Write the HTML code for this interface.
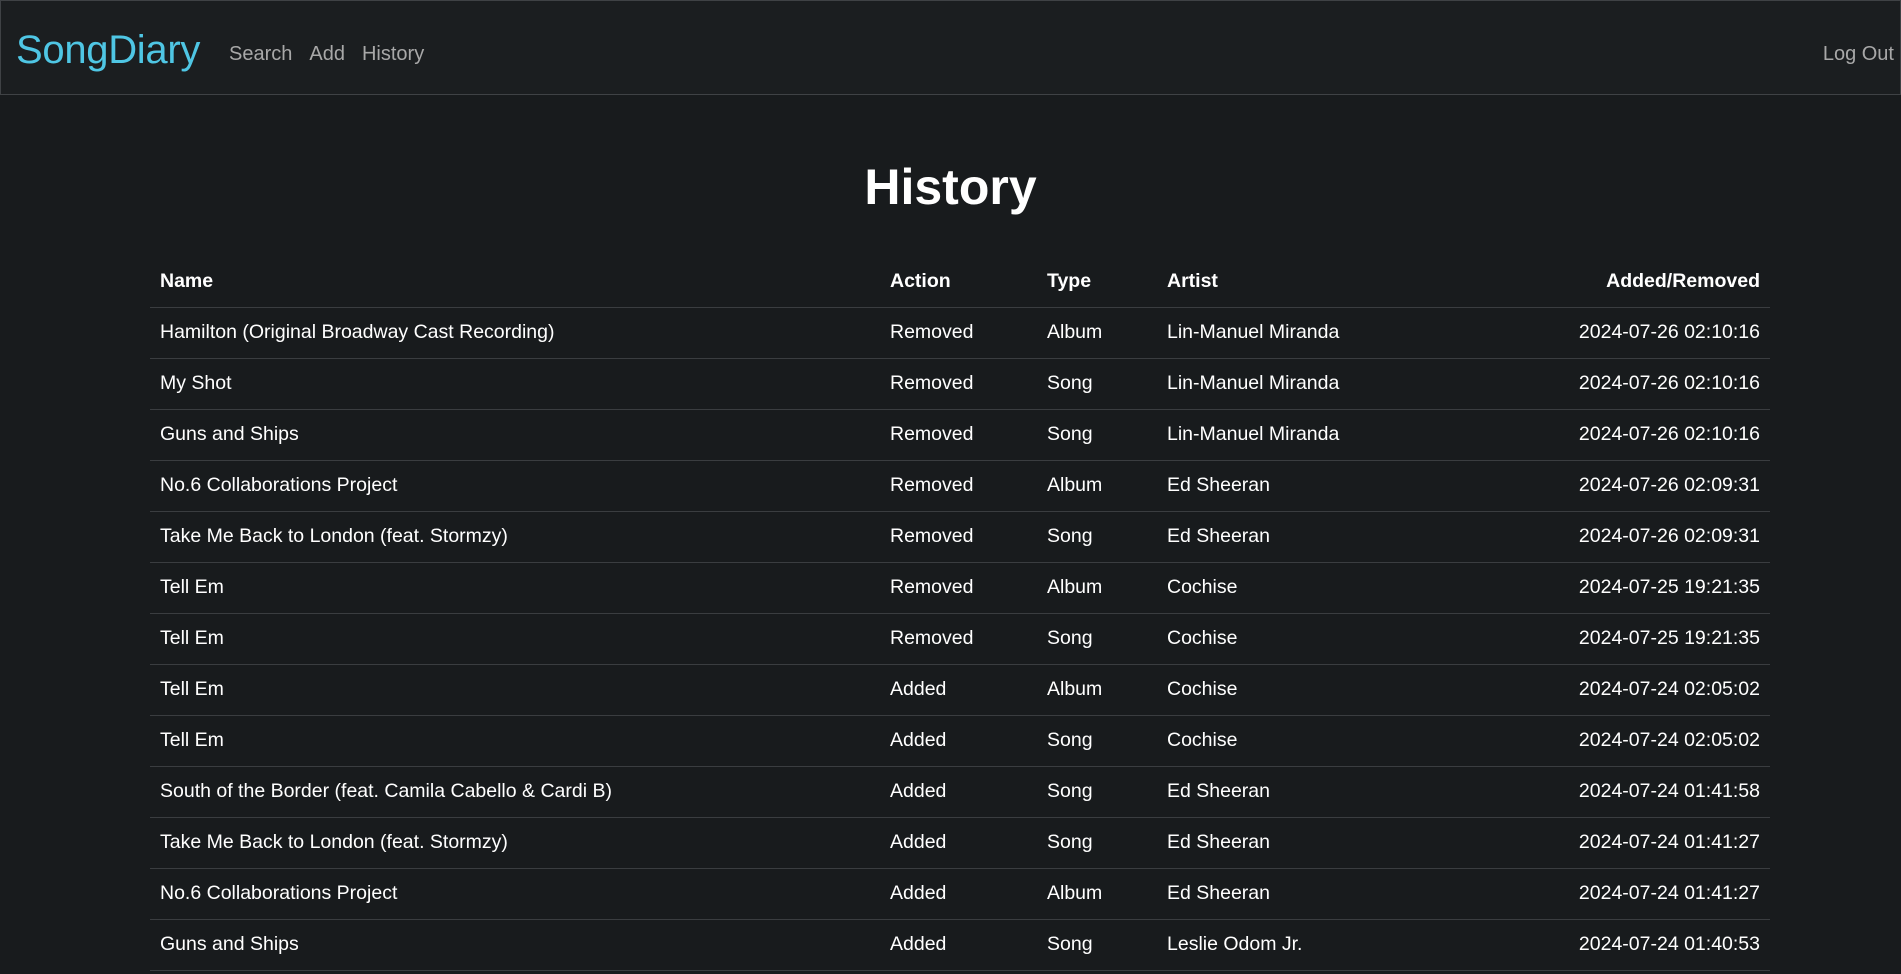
<!DOCTYPE html>
<html><head><meta charset="utf-8"><style>
*{box-sizing:border-box;margin:0;padding:0}
html,body{width:1901px;height:974px;overflow:hidden}
body{background:#181b1d;font-family:"Segoe UI","Liberation Sans",sans-serif;color:#fff;position:relative}
nav{height:95px;border:1px solid #3f4245;background:#1b1e20;position:relative}
.logo{position:absolute;left:15px;top:27px;font-size:40px;color:#4fc6e4;letter-spacing:-0.3px}
.links{position:absolute;left:228px;top:42px;font-size:20px;color:#a8a8a8}
.links span{margin-right:17px}
.out{position:absolute;right:6px;top:42px;font-size:20px;color:#a8a8a8}
h1{position:absolute;top:158px;left:0;width:1901px;text-align:center;font-size:50px;font-weight:bold}
table{position:absolute;left:150px;top:256px;width:1620px;border-collapse:collapse;font-size:19.5px}
td,th{height:51px;padding:0 10px;text-align:left;border-bottom:1px solid #3a3d40;white-space:nowrap}
th{font-weight:bold;height:51px}
td:nth-child(5),th:nth-child(5){text-align:right}
.c1{width:730px}.c2{width:157px}.c3{width:120px}
</style></head><body>
<nav><div class="logo">SongDiary</div><div class="links"><span>Search</span><span>Add</span><span>History</span></div><div class="out">Log Out</div></nav>
<h1>History</h1>
<table>
<tr><th class="c1">Name</th><th class="c2">Action</th><th class="c3">Type</th><th>Artist</th><th>Added/Removed</th></tr>
<tr><td>Hamilton (Original Broadway Cast Recording)</td><td>Removed</td><td>Album</td><td>Lin-Manuel Miranda</td><td>2024-07-26 02:10:16</td></tr>
<tr><td>My Shot</td><td>Removed</td><td>Song</td><td>Lin-Manuel Miranda</td><td>2024-07-26 02:10:16</td></tr>
<tr><td>Guns and Ships</td><td>Removed</td><td>Song</td><td>Lin-Manuel Miranda</td><td>2024-07-26 02:10:16</td></tr>
<tr><td>No.6 Collaborations Project</td><td>Removed</td><td>Album</td><td>Ed Sheeran</td><td>2024-07-26 02:09:31</td></tr>
<tr><td>Take Me Back to London (feat. Stormzy)</td><td>Removed</td><td>Song</td><td>Ed Sheeran</td><td>2024-07-26 02:09:31</td></tr>
<tr><td>Tell Em</td><td>Removed</td><td>Album</td><td>Cochise</td><td>2024-07-25 19:21:35</td></tr>
<tr><td>Tell Em</td><td>Removed</td><td>Song</td><td>Cochise</td><td>2024-07-25 19:21:35</td></tr>
<tr><td>Tell Em</td><td>Added</td><td>Album</td><td>Cochise</td><td>2024-07-24 02:05:02</td></tr>
<tr><td>Tell Em</td><td>Added</td><td>Song</td><td>Cochise</td><td>2024-07-24 02:05:02</td></tr>
<tr><td>South of the Border (feat. Camila Cabello &amp; Cardi B)</td><td>Added</td><td>Song</td><td>Ed Sheeran</td><td>2024-07-24 01:41:58</td></tr>
<tr><td>Take Me Back to London (feat. Stormzy)</td><td>Added</td><td>Song</td><td>Ed Sheeran</td><td>2024-07-24 01:41:27</td></tr>
<tr><td>No.6 Collaborations Project</td><td>Added</td><td>Album</td><td>Ed Sheeran</td><td>2024-07-24 01:41:27</td></tr>
<tr><td>Guns and Ships</td><td>Added</td><td>Song</td><td>Leslie Odom Jr.</td><td>2024-07-24 01:40:53</td></tr>
</table>
</body></html>
